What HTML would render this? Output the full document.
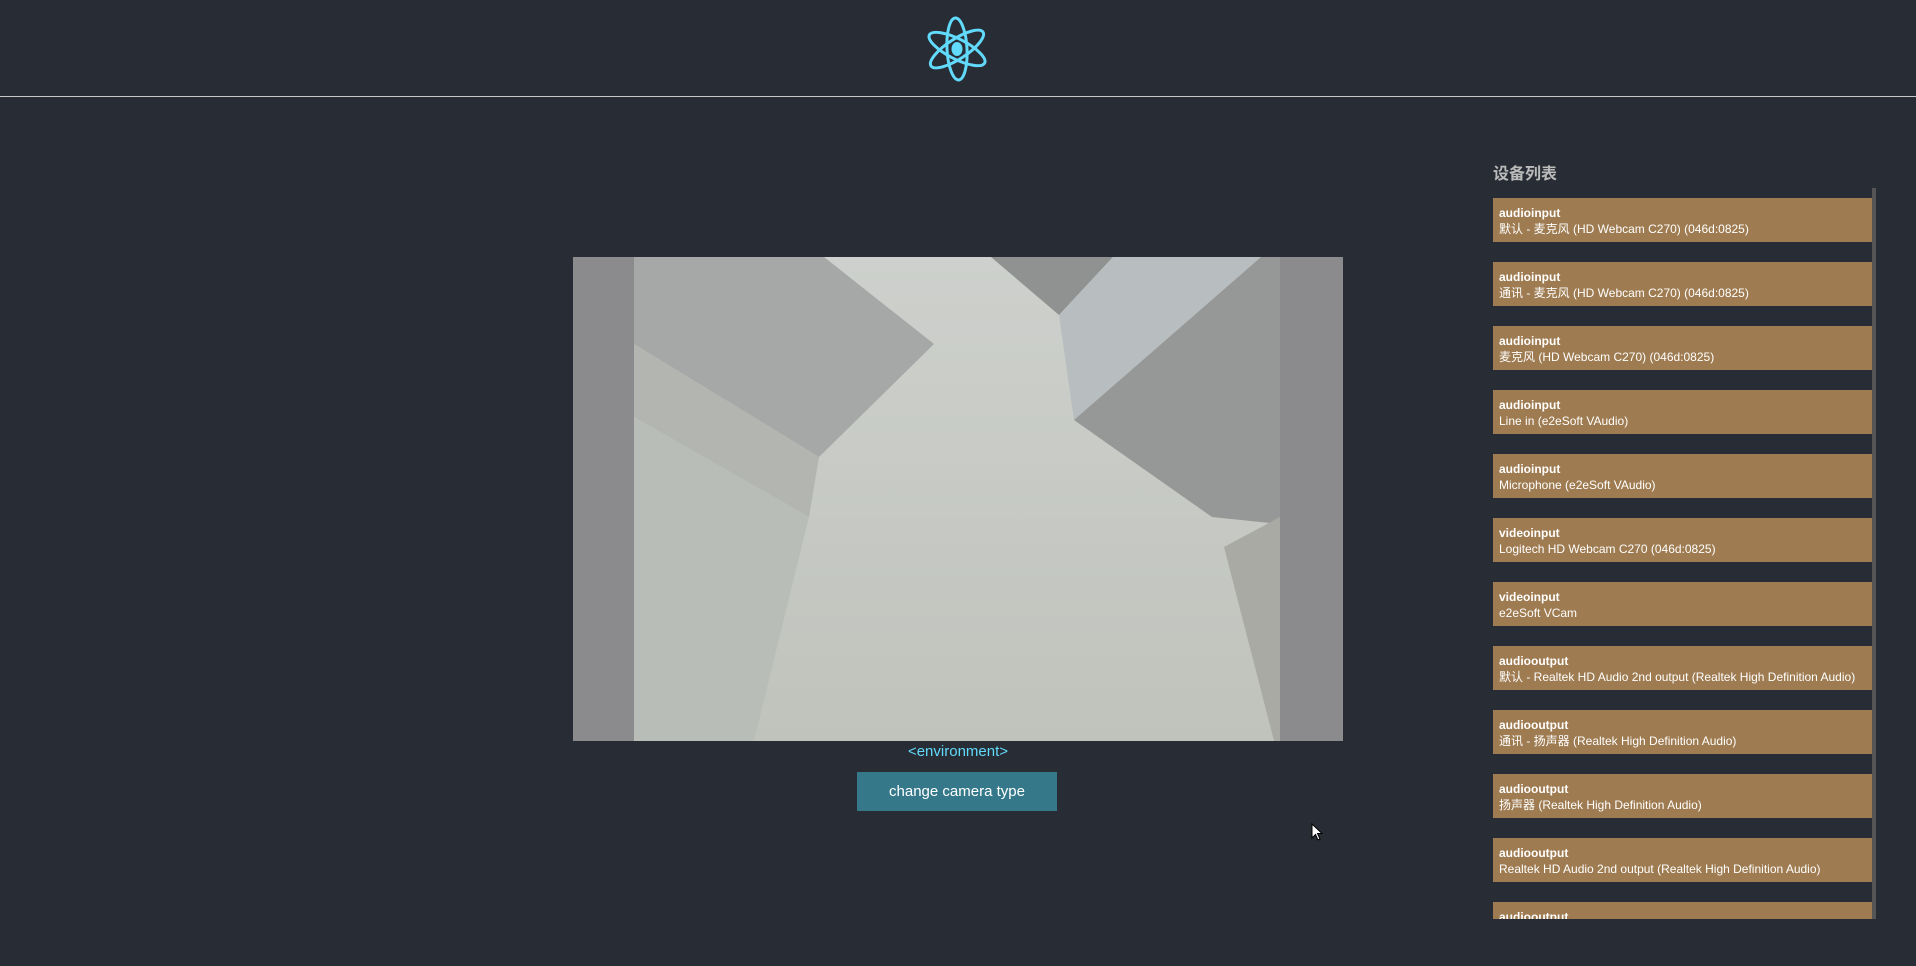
<!DOCTYPE html>
<html><head><meta charset="utf-8"><style>
html,body{margin:0;padding:0;background:#282c34;width:1916px;height:966px;overflow:hidden;font-family:"Liberation Sans","Noto Sans CJK SC",sans-serif}
.hdr{position:absolute;left:0;top:0;width:1916px;height:96px;border-bottom:1px solid #c8c8c8}
.logo{position:absolute;left:925px;top:15px}
.vid{position:absolute;left:573px;top:257px;width:770px;height:484px;background:#8b8a8c}
.vid svg{position:absolute;left:61px;top:0}
.env{position:absolute;left:0;width:1916px;text-align:center;top:743px;color:#61dafb;font-size:15px}
.btn{position:absolute;left:857px;top:772px;width:200px;height:39px;background:#35788a;color:#fff;font-size:15px;text-align:center;line-height:40px}
.title{position:absolute;left:1493px;top:160px;color:#bbbbbb;font-size:16px;font-weight:bold}
.list{position:absolute;left:1493px;top:188px;width:380px;height:731px;overflow:hidden}
.sb{position:absolute;left:1872px;top:188px;width:4px;height:731px;background:#555}
.it{position:absolute;left:0;width:379px;height:44px;background:#9e7b50;color:#fff;font-size:12px;line-height:16px;box-sizing:border-box;padding:7px 6px 0}
.it b{display:block}
</style></head><body>
<div class="hdr"></div>
<svg class="logo" width="64" height="68" viewBox="0 0 64 68">
<g fill="none" stroke="#61dafb" stroke-width="3" transform="translate(32,34)">
<ellipse rx="10" ry="31" transform="rotate(-3)"/>
<ellipse rx="10" ry="31" transform="rotate(57)"/>
<ellipse rx="10" ry="31" transform="rotate(-63)"/>
</g>
<ellipse cx="32" cy="34" rx="5.5" ry="7" fill="#61dafb"/>
</svg>
<div class="vid"><svg width="646" height="484" viewBox="0 0 646 484">
<defs><linearGradient id="g" x1="0" y1="0" x2="0" y2="1"><stop offset="0" stop-color="#cdd0cc"/><stop offset="1" stop-color="#c0c3bc"/></linearGradient></defs>
<rect width="646" height="484" fill="url(#g)"/>
<polygon points="0,0 190,0 300,87 185,200 0,87" fill="#a6a8a7"/>
<polygon points="0,87 185,200 175,260 0,160" fill="#b2b5b0"/>
<polygon points="357,0 479,0 425,58" fill="#8f9290"/>
<polygon points="479,0 627,0 440,163 425,58" fill="#b8bebf"/>
<polygon points="440,163 627,0 646,0 646,267 578,260" fill="#969797"/>
<polygon points="590,290 646,260 646,484 640,484" fill="#aaaaa4"/>
<polygon points="0,160 175,260 120,484 0,484" fill="#b9bdb8"/>
</svg></div>
<div class="env">&lt;environment&gt;</div>
<div class="btn">change camera type</div>
<div class="title">设备列表</div>
<div class="list">
<div class="it" style="top:10px"><b>audioinput</b>默认 - 麦克风 (HD Webcam C270) (046d:0825)</div>
<div class="it" style="top:74px"><b>audioinput</b>通讯 - 麦克风 (HD Webcam C270) (046d:0825)</div>
<div class="it" style="top:138px"><b>audioinput</b>麦克风 (HD Webcam C270) (046d:0825)</div>
<div class="it" style="top:202px"><b>audioinput</b>Line in (e2eSoft VAudio)</div>
<div class="it" style="top:266px"><b>audioinput</b>Microphone (e2eSoft VAudio)</div>
<div class="it" style="top:330px"><b>videoinput</b>Logitech HD Webcam C270 (046d:0825)</div>
<div class="it" style="top:394px"><b>videoinput</b>e2eSoft VCam</div>
<div class="it" style="top:458px"><b>audiooutput</b>默认 - Realtek HD Audio 2nd output (Realtek High Definition Audio)</div>
<div class="it" style="top:522px"><b>audiooutput</b>通讯 - 扬声器 (Realtek High Definition Audio)</div>
<div class="it" style="top:586px"><b>audiooutput</b>扬声器 (Realtek High Definition Audio)</div>
<div class="it" style="top:650px"><b>audiooutput</b>Realtek HD Audio 2nd output (Realtek High Definition Audio)</div>
<div class="it" style="top:714px"><b>audiooutput</b></div>
</div>
<div class="sb"></div>
<svg style="position:absolute;left:1311px;top:823px" width="12" height="18"><path d="M1 1 L1 15 L4.5 11.5 L7 17 L9 16 L6.5 10.5 L11 10.5 Z" fill="#fff" stroke="#000" stroke-width="1"/></svg>
</body></html>
